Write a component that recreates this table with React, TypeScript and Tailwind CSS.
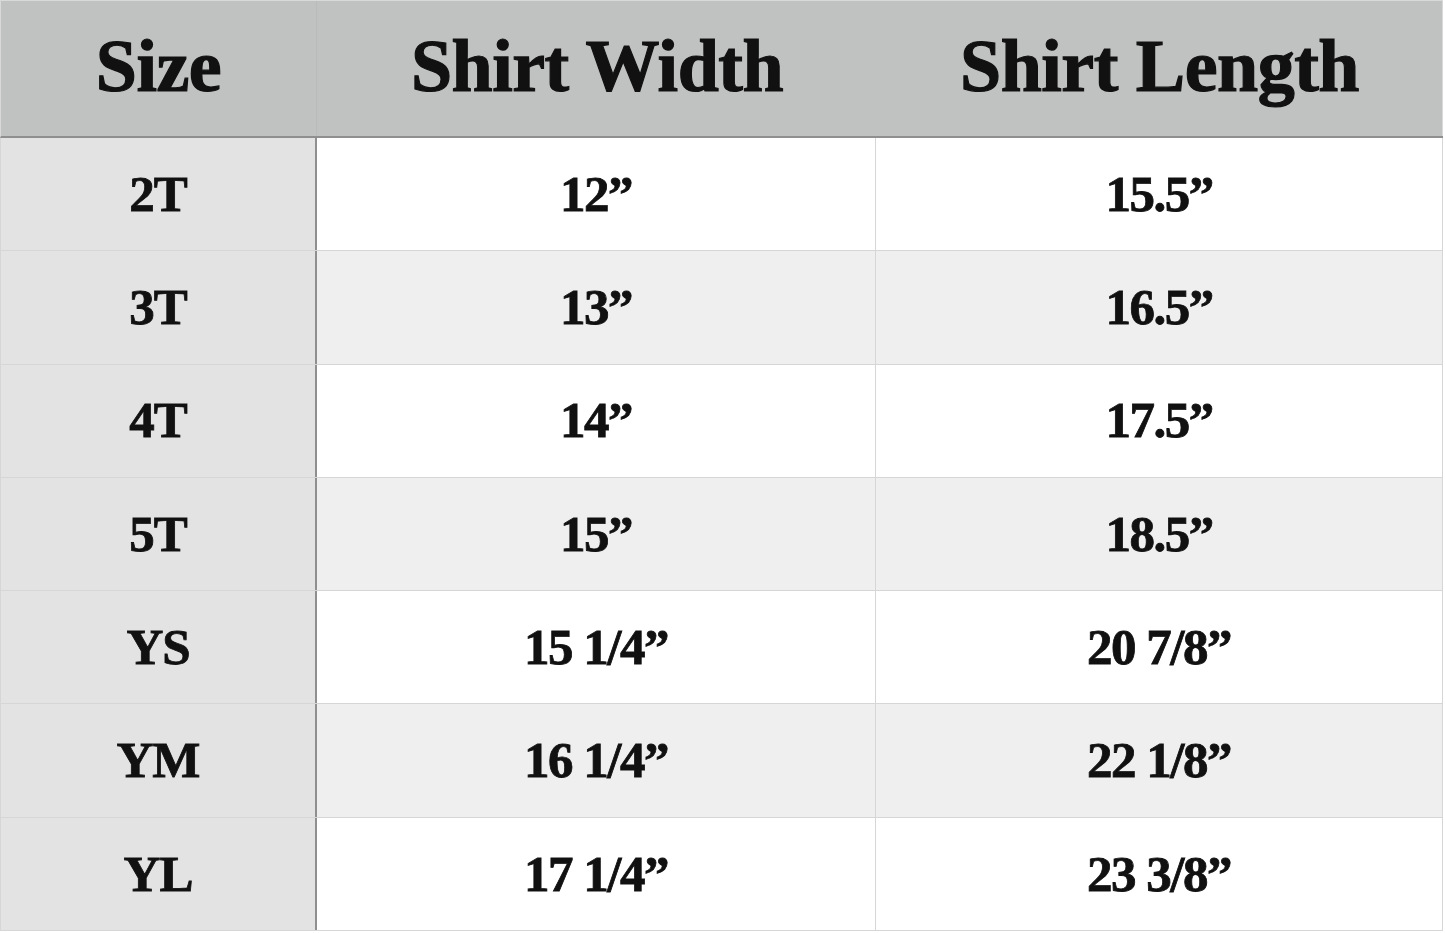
const rows = [
  { size: "2T", width: "12”", length: "15.5”" },
  { size: "3T", width: "13”", length: "16.5”" },
  { size: "4T", width: "14”", length: "17.5”" },
  { size: "5T", width: "15”", length: "18.5”" },
  { size: "YS", width: "15 1/4”", length: "20 7/8”" },
  { size: "YM", width: "16 1/4”", length: "22 1/8”" },
  { size: "YL", width: "17 1/4”", length: "23 3/8”" },
];

export default function App() {
  return (
    <div className="min-h-screen bg-white">
      <div className="w-[1443px] font-['Liberation_Serif',serif] font-bold text-[#111111]">
        {/* Header */}
        <div className="flex h-[138px] border-t border-l border-[#d9d9d9] border-b-2 border-b-[#8f8f8f] bg-[#c0c2c1] text-[74px] tracking-[-0.5px] [-webkit-text-stroke:1.2px_#111111]">
          <div className="flex w-[316px] items-center justify-center border-r border-[#b9bbba] pb-1">
            Size
          </div>
          <div className="flex w-[560px] items-center justify-center pb-1">
            Shirt Width
          </div>
          <div className="flex flex-1 items-center justify-center border-r border-[#d9d9d9] pb-1">
            Shirt Length
          </div>
        </div>

        {/* Body */}
        {rows.map((row, i) => (
          <div
            key={row.size}
            className={`flex h-[113.3px] border-b border-l border-[#d6d6d6] text-[51px] [-webkit-text-stroke:0.8px_#111111] ${
              i % 2 === 1 ? "bg-[#efefef]" : "bg-white"
            }`}
          >
            <div className="flex w-[316px] items-center justify-center border-r-2 border-r-[#8f8f8f] bg-[#e3e3e3] tracking-[-1px]">
              {row.size}
            </div>
            <div className="flex w-[559px] items-center justify-center border-r border-[#d6d6d6] tracking-[-1.5px]">
              {row.width}
            </div>
            <div className="flex flex-1 items-center justify-center border-r border-[#d6d6d6] tracking-[-1.5px]">
              {row.length}
            </div>
          </div>
        ))}
      </div>
    </div>
  );
}
